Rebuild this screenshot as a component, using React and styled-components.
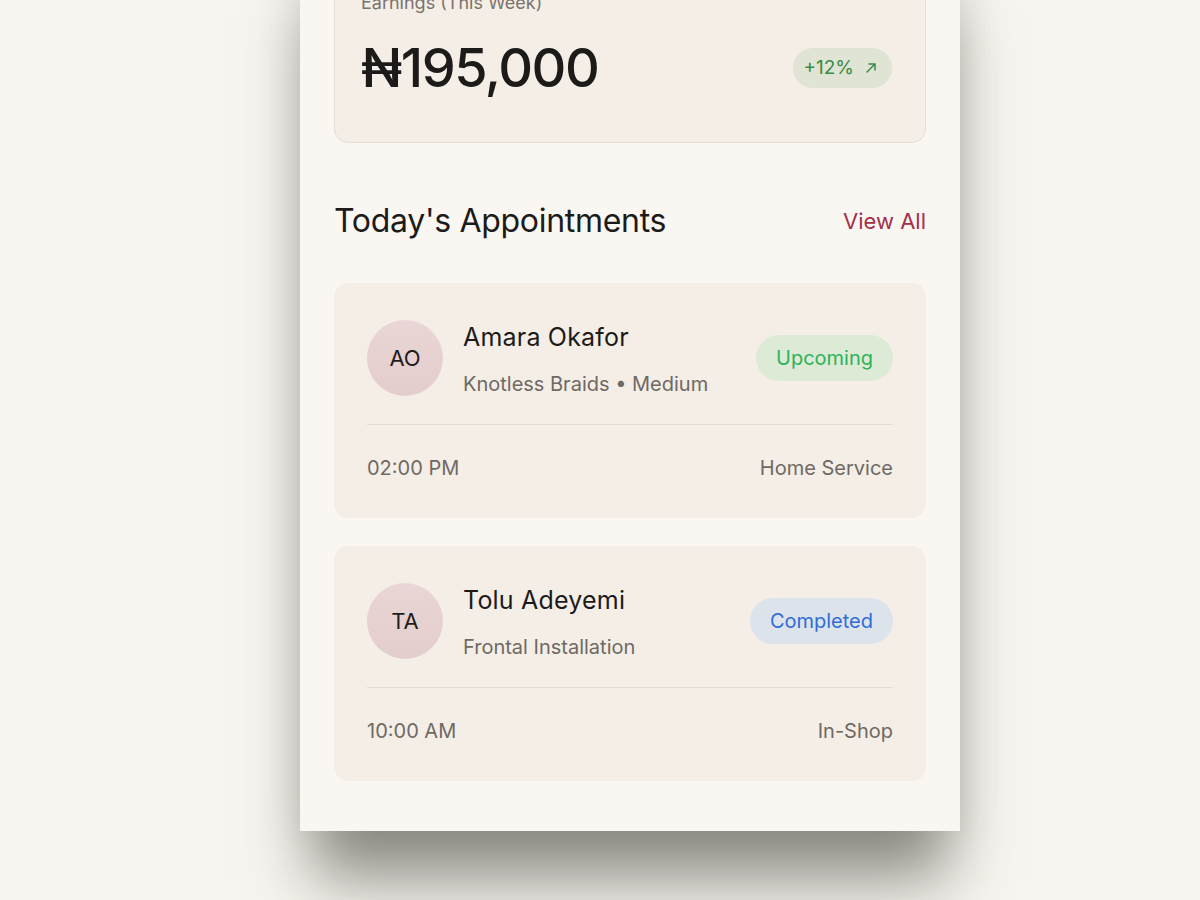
import React from 'react';
import styled, { createGlobalStyle } from 'styled-components';

const GlobalStyle = createGlobalStyle`
  html, body {
    margin: 0;
    padding: 0;
    background: #f8f5f0;
    font-family: Inter, "Liberation Sans", sans-serif;
  }
`;

const Stage = styled.div`
  height: 900px;
  overflow: hidden;
  display: flex;
  justify-content: flex-start;
  padding-left: 300px;
`;

const Phone = styled.div`
  width: 660px;
  margin-top: -61px;
  height: 892px;
  box-sizing: border-box;
  background: #faf7f2;
  padding: 30px 34px 0;
  box-shadow: 0 60px 60px -12px rgba(70, 70, 60, 0.6), 0 0 45px rgba(0, 0, 0, 0.08);
`;

const EarningsCard = styled.div`
  background: #f4eee7;
  border: 1px solid #e6ddd3;
  border-radius: 14px;
  padding: 22px 33px 42px 26px;
`;

const EarningsLabel = styled.div`
  font-size: 18px;
  color: #7a746d;
`;

const EarningsRow = styled.div`
  display: flex;
  align-items: center;
  justify-content: space-between;
  margin-top: 22px;
`;

const Amount = styled.div`
  font-size: 54px;
  font-weight: 500;
  color: #1c1b19;
  letter-spacing: -1.5px;
`;

const Trend = styled.div`
  display: flex;
  align-items: center;
  gap: 10px;
  height: 40px;
  padding: 0 14px 0 10px;
  border-radius: 20px;
  background: #dfe4d5;
  color: #3a8a45;
  font-size: 19px;
`;

const SectionHeader = styled.div`
  display: flex;
  align-items: center;
  justify-content: space-between;
  margin: 58px 0 43px;
`;

const SectionTitle = styled.h2`
  margin: 0;
  font-size: 32px;
  font-weight: 400;
  color: #1c1b19;
  letter-spacing: -0.3px;
`;

const ViewAll = styled.a`
  font-size: 22px;
  color: #a3304a;
  text-decoration: none;
`;

const List = styled.div`
  display: flex;
  flex-direction: column;
  gap: 28px;
`;

const Card = styled.div`
  background: #f4eee7;
  border-radius: 14px;
  padding: 37px 33px 38px;
`;

const TopRow = styled.div`
  display: flex;
  align-items: center;
  gap: 20px;
`;

const Avatar = styled.div`
  width: 76px;
  height: 76px;
  border-radius: 50%;
  background: linear-gradient(180deg, #ead6d6, #e3cccc);
  display: flex;
  align-items: center;
  justify-content: center;
  font-size: 22px;
  color: #1f1d1b;
  flex-shrink: 0;
`;

const Info = styled.div`
  flex: 1;
  display: flex;
  flex-direction: column;
  gap: 20px;
  margin-top: 2px;
`;

const Name = styled.div`
  font-size: 25px;
  color: #1c1b19;
  letter-spacing: 0.2px;
`;

const Service = styled.div`
  font-size: 20px;
  color: #6f6963;
`;

const Status = styled.div`
  height: 46px;
  padding: 0 20px;
  border-radius: 23px;
  display: flex;
  align-items: center;
  font-size: 20px;
  background: ${p => (p.kind === 'done' ? '#dde3ea' : '#dcead6')};
  color: ${p => (p.kind === 'done' ? '#2f6cd8' : '#2eb35a')};
`;

const Divider = styled.hr`
  border: 0;
  border-top: 1px solid #e6dbd2;
  margin: 28px 0 31px;
`;

const BottomRow = styled.div`
  display: flex;
  justify-content: space-between;
  font-size: 20px;
  color: #6f6963;
`;

const appointments = [
  { initials: 'AO', name: 'Amara Okafor', service: 'Knotless Braids • Medium', status: 'Upcoming', kind: 'up', time: '02:00 PM', place: 'Home Service' },
  { initials: 'TA', name: 'Tolu Adeyemi', service: 'Frontal Installation', status: 'Completed', kind: 'done', time: '10:00 AM', place: 'In-Shop' },
];

const ArrowUpRight = () => (
  <svg width="14" height="14" viewBox="0 0 14 14" fill="none" stroke="currentColor" strokeWidth="1.5" strokeLinecap="round">
    <path d="M3 11 L11 3 M5 3 H11 V9" />
  </svg>
);

const App = () => (
  <>
    <GlobalStyle />
    <Stage>
      <Phone>
        <EarningsCard>
          <EarningsLabel>Earnings (This Week)</EarningsLabel>
          <EarningsRow>
            <Amount>₦195,000</Amount>
            <Trend>+12% <ArrowUpRight /></Trend>
          </EarningsRow>
        </EarningsCard>

        <SectionHeader>
          <SectionTitle>Today's Appointments</SectionTitle>
          <ViewAll href="#">View All</ViewAll>
        </SectionHeader>

        <List>
          {appointments.map(item => (
            <Card key={item.name}>
              <TopRow>
                <Avatar>{item.initials}</Avatar>
                <Info>
                  <Name>{item.name}</Name>
                  <Service>{item.service}</Service>
                </Info>
                <Status kind={item.kind}>{item.status}</Status>
              </TopRow>
              <Divider />
              <BottomRow>
                <span>{item.time}</span>
                <span>{item.place}</span>
              </BottomRow>
            </Card>
          ))}
        </List>
      </Phone>
    </Stage>
  </>
);

export default App;
